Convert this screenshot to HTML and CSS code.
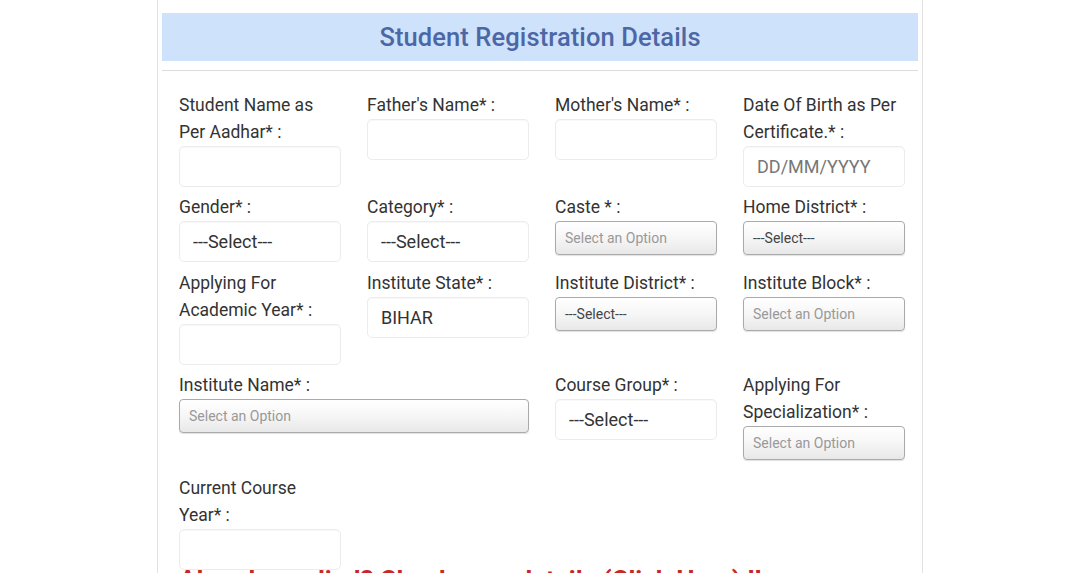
FILE: index.html
```html
<!DOCTYPE html>
<html lang="en">
<head>
<meta charset="utf-8">
<title>Student Registration Details</title>
<link rel="stylesheet" href="styles.css">
</head>
<body>
<div class="container">
  <div class="band"><h2 class="title">Student Registration Details</h2></div>
  <hr class="rule">
  <div class="form-grid">
    <div class="field">
      <label class="lbl">Student Name as Per Aadhar* :</label>
      <input class="ctrl" type="text">
    </div>
    <div class="field">
      <label class="lbl">Father's Name* :</label>
      <input class="ctrl" type="text">
    </div>
    <div class="field">
      <label class="lbl">Mother's Name* :</label>
      <input class="ctrl" type="text">
    </div>
    <div class="field">
      <label class="lbl">Date Of Birth as Per Certificate.* :</label>
      <input class="ctrl" type="text" placeholder="DD/MM/YYYY">
    </div>

    <div class="field">
      <label class="lbl">Gender* :</label>
      <div class="ctrl sel-plain">---Select---</div>
    </div>
    <div class="field">
      <label class="lbl">Category* :</label>
      <div class="ctrl sel-plain">---Select---</div>
    </div>
    <div class="field">
      <label class="lbl">Caste * :</label>
      <div class="s2wrap"><div class="s2 ph">Select an Option</div></div>
    </div>
    <div class="field">
      <label class="lbl">Home District* :</label>
      <div class="s2wrap"><div class="s2">---Select---</div></div>
    </div>

    <div class="field">
      <label class="lbl">Applying For Academic Year* :</label>
      <input class="ctrl" type="text">
    </div>
    <div class="field">
      <label class="lbl">Institute State* :</label>
      <input class="ctrl" type="text" value="BIHAR">
    </div>
    <div class="field">
      <label class="lbl">Institute District* :</label>
      <div class="s2wrap"><div class="s2">---Select---</div></div>
    </div>
    <div class="field">
      <label class="lbl">Institute Block* :</label>
      <div class="s2wrap"><div class="s2 ph">Select an Option</div></div>
    </div>

    <div class="field span2">
      <label class="lbl">Institute Name* :</label>
      <div class="s2wrap"><div class="s2 ph">Select an Option</div></div>
    </div>
    <div class="field">
      <label class="lbl">Course Group* :</label>
      <div class="ctrl sel-plain">---Select---</div>
    </div>
    <div class="field">
      <label class="lbl">Applying For Specialization* :</label>
      <div class="s2wrap"><div class="s2 ph">Select an Option</div></div>
    </div>

    <div class="field">
      <label class="lbl">Current Course Year* :</label>
      <input class="ctrl" type="text">
    </div>
  </div>
  <h3 class="note">Already applied? Check your details (Click Here) !!</h3>
</div>
</body>
</html>
```
FILE: styles.css
```css
html, body {
  margin: 0;
  padding: 0;
  background: #ffffff;
  font-family: Roboto, "Liberation Sans", Arial, sans-serif;
  color: #333333;
  overflow: hidden;
}

.container {
  width: 756px;
  margin: 0 auto;
  padding: 13px 4px 0 4px;
  border-left: 1px solid #e2e2e2;
  border-right: 1px solid #e2e2e2;
  min-height: 600px;
}

.band {
  background: #cfe2fb;
  height: 48px;
  display: flex;
  align-items: center;
  justify-content: center;
}

.title {
  margin: 0;
  font-size: 25.5px;
  font-weight: 500;
  color: #4c67a5;
  letter-spacing: 0.1px;
}

.rule {
  margin: 9px 0 0 0;
  border: 0;
  border-top: 1px solid #dcdcdc;
  height: 0;
}

.form-grid {
  display: grid;
  grid-template-columns: repeat(4, 162px);
  column-gap: 26px;
  row-gap: 7.5px;
  padding: 20.5px 0 0 17px;
  align-items: start;
}

.span2 {
  grid-column: span 2;
}

.lbl {
  display: block;
  font-size: 17.5px;
  line-height: 27px;
  color: #333333;
}

.ctrl {
  display: block;
  box-sizing: border-box;
  width: 100%;
  height: 41px;
  margin: 0;
  padding: 0 13px;
  border: 1px solid #ececec;
  border-radius: 5px;
  background: #ffffff;
  font-family: Roboto, "Liberation Sans", Arial, sans-serif;
  font-size: 18px;
  color: #333333;
  box-shadow: inset 0 1px 1px rgba(0, 0, 0, 0.03);
  outline: none;
}

.ctrl::placeholder {
  color: #777777;
}

.sel-plain {
  display: flex;
  align-items: center;
  line-height: 1;
}

.s2wrap {
  height: 41px;
}

.s2 {
  box-sizing: border-box;
  height: 34px;
  padding: 0 9px;
  display: flex;
  align-items: center;
  border: 1px solid #aaaaaa;
  border-radius: 4px;
  background: linear-gradient(to bottom, #ffffff 0%, #f6f6f6 50%, #e8e8e8 100%);
  box-shadow: 0 1px 1px rgba(0, 0, 0, 0.12);
  font-size: 14px;
  color: #444444;
}

.s2.ph {
  color: #999999;
}

.note {
  margin: -5px 0 0 0;
  padding-left: 17px;
  font-size: 26px;
  line-height: 30px;
  font-weight: 700;
  color: #c62828;
  white-space: nowrap;
}
```
